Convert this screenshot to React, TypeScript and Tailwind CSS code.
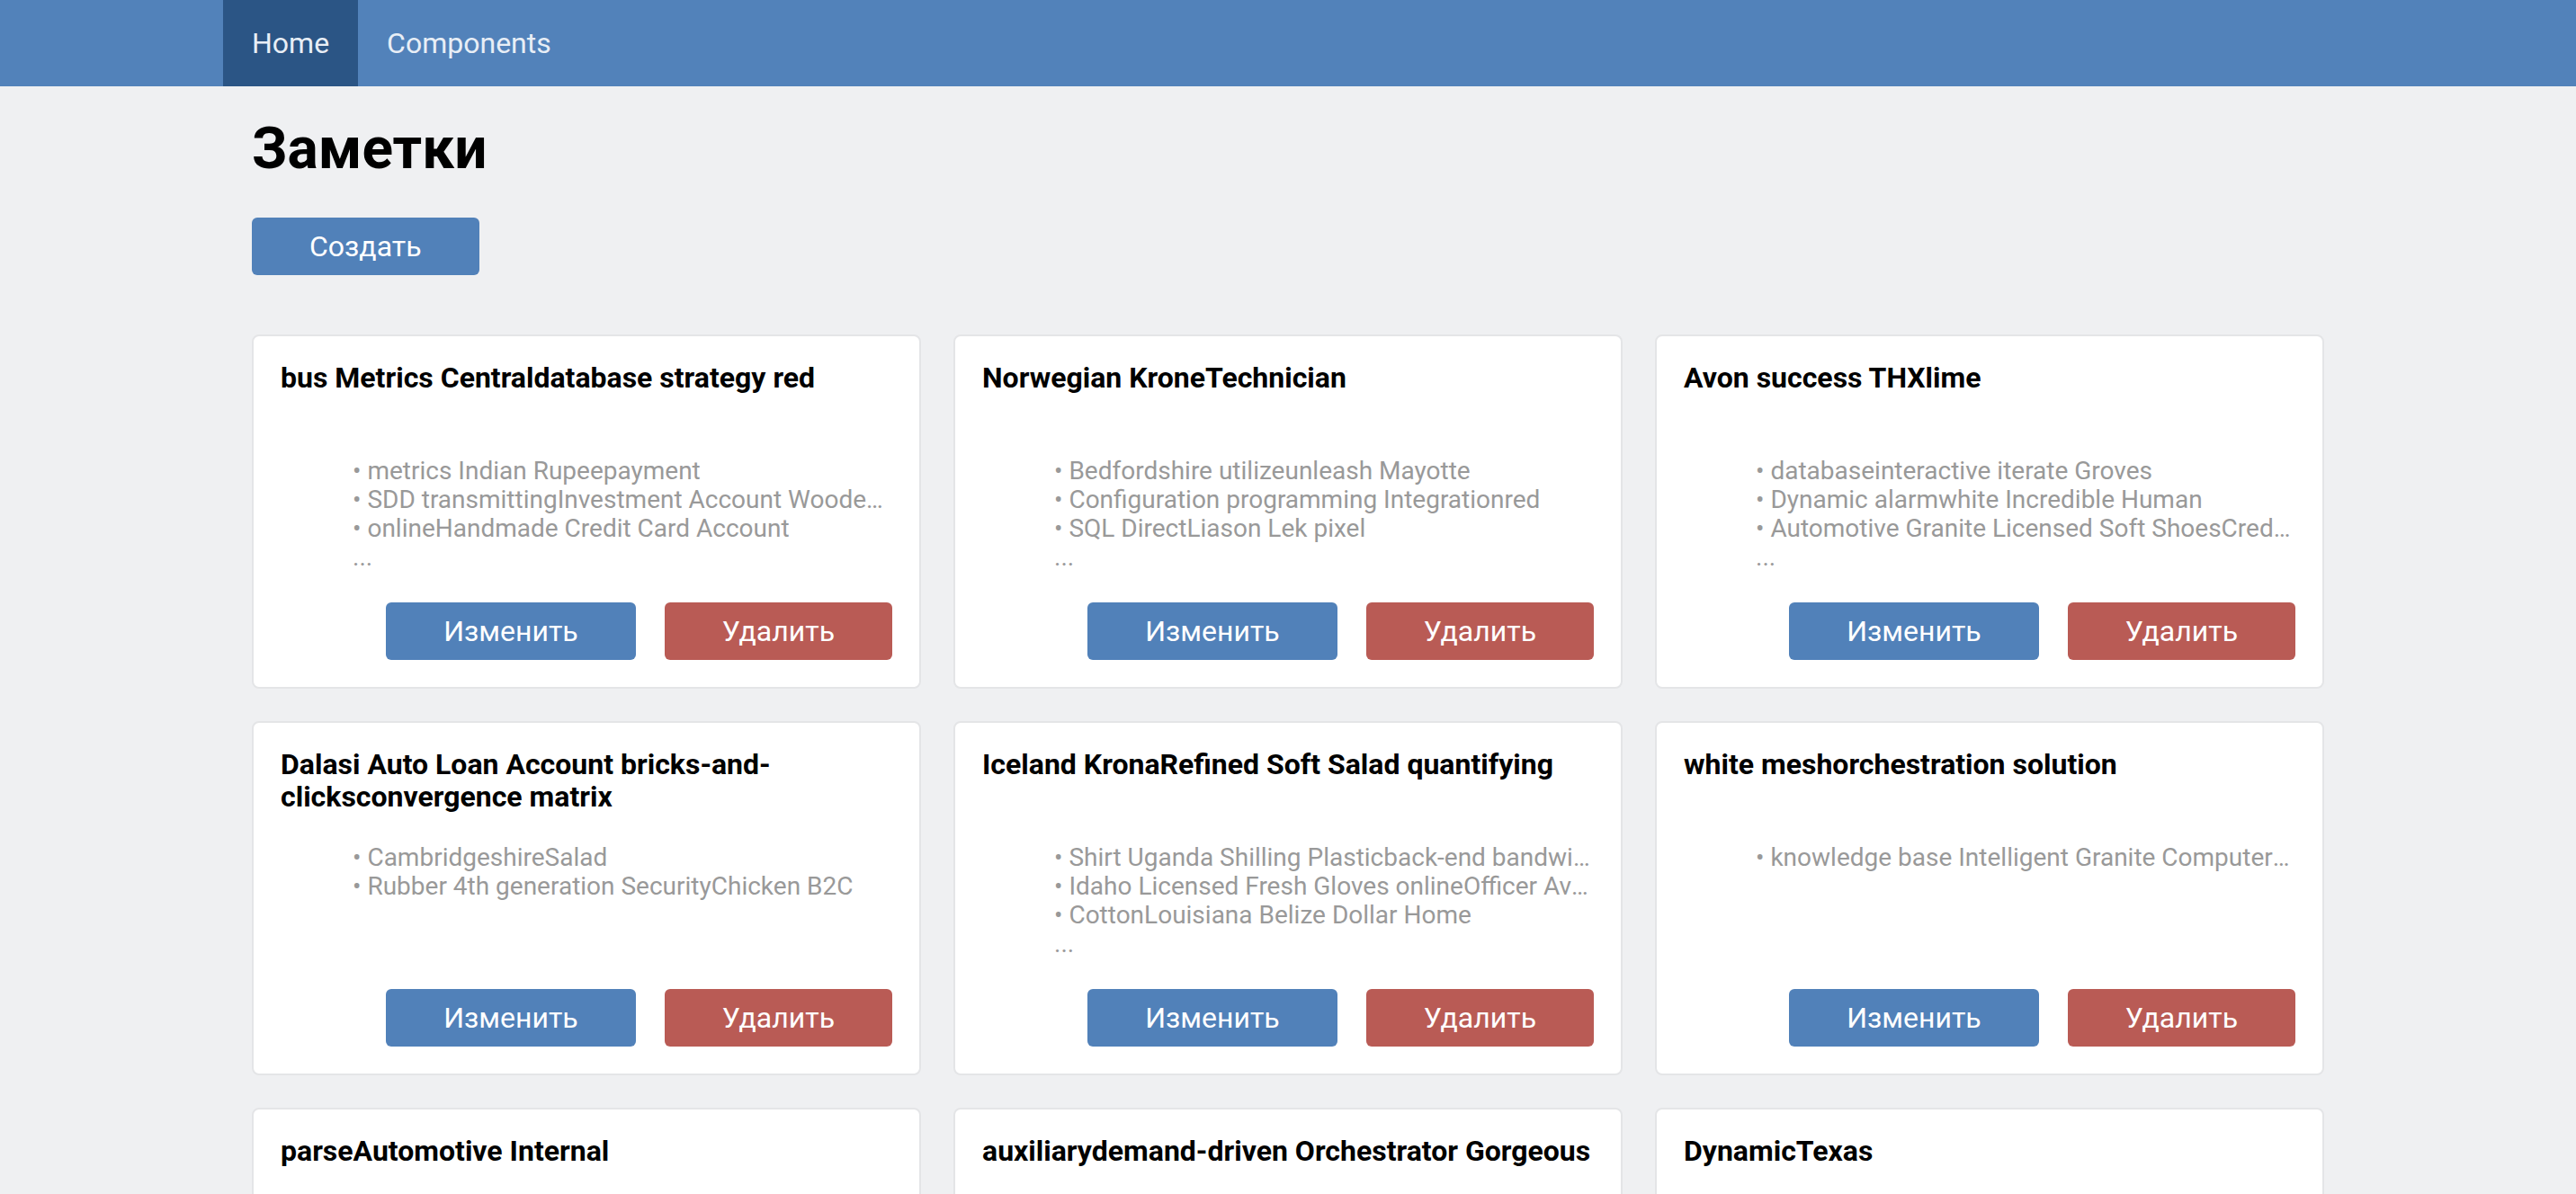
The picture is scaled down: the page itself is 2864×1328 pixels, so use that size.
const notes = [
  {
    title: "bus Metrics Centraldatabase strategy red",
    items: [
      "metrics Indian Rupeepayment",
      "SDD transmittingInvestment Account Wooden Chair",
      "onlineHandmade Credit Card Account",
      "Cotton Handcrafted",
    ],
  },
  {
    title: "Norwegian KroneTechnician",
    items: [
      "Bedfordshire utilizeunleash Mayotte",
      "Configuration programming Integrationred",
      "SQL DirectLiason Lek pixel",
      "Generic Rubber",
    ],
  },
  {
    title: "Avon success THXlime",
    items: [
      "databaseinteractive iterate Groves",
      "Dynamic alarmwhite Incredible Human",
      "Automotive Granite Licensed Soft ShoesCredit Card Account",
      "input Planner",
    ],
  },
  {
    title: "Dalasi Auto Loan Account bricks-and-clicksconvergence matrix",
    items: ["CambridgeshireSalad", "Rubber 4th generation SecurityChicken B2C"],
  },
  {
    title: "Iceland KronaRefined Soft Salad quantifying",
    items: [
      "Shirt Uganda Shilling Plasticback-end bandwidth",
      "Idaho Licensed Fresh Gloves onlineOfficer Avon",
      "CottonLouisiana Belize Dollar Home",
      "Fantastic Soft Table",
    ],
  },
  {
    title: "white meshorchestration solution",
    items: ["knowledge base Intelligent Granite Computer Bedfordshire"],
  },
  {
    title: "parseAutomotive Internal",
    items: ["Handcrafted Metal Keyboard", "Money Market Account"],
  },
  {
    title: "auxiliarydemand-driven Orchestrator Gorgeous",
    items: ["Tasty Frozen Fish", "payment Intranet"],
  },
  {
    title: "DynamicTexas",
    items: ["Refined Cotton Pizza"],
  },
];

function NoteCard({ title, items }: { title: string; items: string[] }) {
  const shown = items.slice(0, 3);
  return (
    <div className="rounded-[8px] border-2 border-[#e4e5e7] bg-white px-[30px] pt-[28px] pb-[30px]">
      <h3 className="h-[72px] text-[32px] font-bold leading-[36px] text-black">{title}</h3>
      <div className="mt-[34px] h-[128px] pl-[80px] text-[28px] leading-[32px] text-[#999999]">
        {shown.map((item) => (
          <div key={item} className="overflow-hidden text-ellipsis whitespace-nowrap">
            • {item}
          </div>
        ))}
        {items.length > 3 && <div>...</div>}
      </div>
      <div className="mt-[34px] flex justify-end gap-[32px]">
        <button className="h-[64px] rounded-[6px] bg-[#5181b9] px-[64px] text-[32px] text-white">
          Изменить
        </button>
        <button className="h-[64px] rounded-[6px] bg-[#b95b55] px-[64px] text-[32px] text-white">
          Удалить
        </button>
      </div>
    </div>
  );
}

export default function App() {
  return (
    <div className="min-h-screen bg-[#eff0f2] font-['Roboto',sans-serif]">
      <nav className="h-[96px] bg-[#5282ba]">
        <div className="mx-auto flex h-full w-[2368px]">
          <a className="flex items-center bg-[#2b5585] px-[32px] text-[32px] text-[#e8eef6]">Home</a>
          <a className="flex items-center px-[32px] text-[32px] text-[#e8eef6]">Components</a>
        </div>
      </nav>
      <main className="mx-auto w-[2304px] pb-[40px]">
        <h1 className="pt-[32px] text-[64px] font-bold leading-[75px] text-black">Заметки</h1>
        <button className="mt-[39px] h-[64px] rounded-[6px] bg-[#5181b9] px-[64px] text-[32px] text-white">
          Создать
        </button>
        <div className="mt-[66px] grid grid-cols-3 gap-[36px]">
          {notes.map((note) => (
            <NoteCard key={note.title} title={note.title} items={note.items} />
          ))}
        </div>
      </main>
    </div>
  );
}
